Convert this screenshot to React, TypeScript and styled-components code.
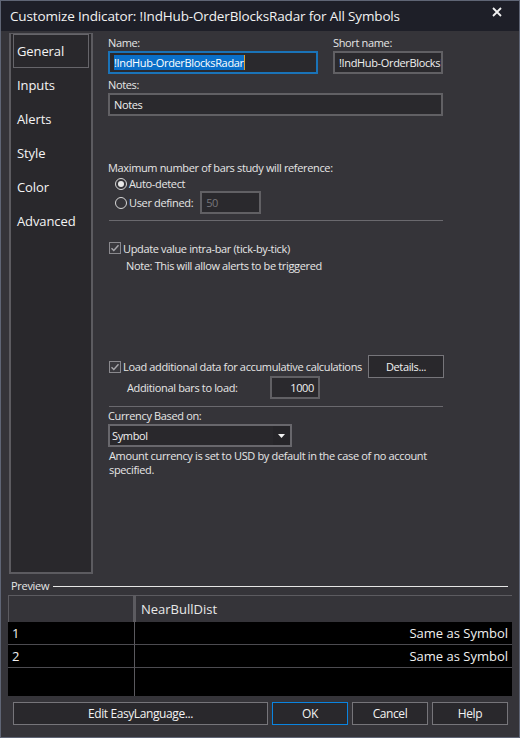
import { Fragment } from 'react';
import styled, { createGlobalStyle } from 'styled-components';

const FONT = `"Open Sans", "Noto Sans", sans-serif`;

const GlobalStyle = createGlobalStyle`
  html, body {
    margin: 0;
    padding: 0;
    background: #353439;
  }
  * { box-sizing: border-box; }
`;

const Window = styled.div`
  width: 520px;
  height: 738px;
  background: #353439;
  border: 1px solid #5f6575;
  display: flex;
  flex-direction: column;
  font-family: ${FONT};
  color: #e6e6e6;
  overflow: hidden;
`;

const TitleBar = styled.div`
  height: 30px;
  flex: none;
  background: #1e1f28;
  display: flex;
  align-items: center;
  justify-content: space-between;
  padding: 0 17px 0 9px;
  font-size: 13.5px;
  letter-spacing: -0.15px;
  color: #f2f2f2;
`;

const CloseIcon = styled.svg`
  width: 10px;
  height: 10px;
  margin-top: -8px;
`;

const Main = styled.div`
  display: flex;
  height: 543px;
  flex: none;
  padding-top: 2px;
  padding-left: 8px;
`;

const Sidebar = styled.nav`
  width: 84px;
  height: 541px;
  border: 2px solid #5c5b60;
  border-top-width: 1px;
  background: #29282c;
  padding: 0 2px;
  display: flex;
  flex-direction: column;
`;

const NavItem = styled.div<{ $active?: boolean }>`
  height: 34px;
  display: flex;
  align-items: center;
  padding-left: 3px;
  font-size: 13px;
  letter-spacing: -0.1px;
  color: #f4f4f4;
  border: 1px solid ${p => (p.$active ? '#66656a' : 'transparent')};
`;

const Content = styled.div`
  margin-left: 15px;
  width: 336px;
  padding-top: 2px;
  display: flex;
  flex-direction: column;
  font-size: 11px;
  letter-spacing: -0.35px;
  white-space: nowrap;
`;

const Row = styled.div<{ $mt?: number; $pl?: number; $h?: number }>`
  display: flex;
  align-items: center;
  margin-top: ${p => p.$mt ?? 0}px;
  padding-left: ${p => p.$pl ?? 0}px;
  height: ${p => (p.$h ? `${p.$h}px` : 'auto')};
  flex: none;
`;

const FieldCol = styled.div<{ $w: number; $ml?: number }>`
  width: ${p => p.$w}px;
  margin-left: ${p => p.$ml ?? 0}px;
  display: flex;
  flex-direction: column;
`;

const Label = styled.div<{ $mt?: number; $pl?: number; $w?: number }>`
  line-height: 16px;
  height: 16px;
  margin-top: ${p => p.$mt ?? 0}px;
  padding-left: ${p => p.$pl ?? 0}px;
  width: ${p => (p.$w ? `${p.$w}px` : 'auto')};
  flex: none;
`;

const TextBox = styled.div<{ $w?: number; $focus?: boolean; $right?: boolean; $dim?: boolean; $mt?: number; $ml?: number }>`
  width: ${p => (p.$w ? `${p.$w}px` : '100%')};
  height: 23px;
  margin-top: ${p => p.$mt ?? 0}px;
  margin-left: ${p => p.$ml ?? 0}px;
  border: 2px solid ${p => (p.$focus ? '#1a73b8' : '#616064')};
  background: #2a292d;
  display: flex;
  align-items: center;
  justify-content: ${p => (p.$right ? 'flex-end' : 'flex-start')};
  padding: 0 4px;
  color: ${p => (p.$dim ? '#77767b' : '#f0f0f0')};
  overflow: hidden;
  flex: none;
`;

const Selected = styled.span`
  background: #0a6fc8;
  color: #ffffff;
  border-right: 1px solid #e0a030;
  line-height: 15px;
`;

const Separator = styled.div<{ $mt: number }>`
  height: 1px;
  width: 334px;
  margin-top: ${p => p.$mt}px;
  margin-left: 1px;
  background: #6a696e;
  flex: none;
`;

const Radio = styled.span<{ $on?: boolean }>`
  width: 12px;
  height: 12px;
  border-radius: 50%;
  border: 1px solid #d8d8d8;
  margin-right: 2px;
  flex: none;
  display: flex;
  align-items: center;
  justify-content: center;
  &::after {
    content: '';
    width: 6px;
    height: 6px;
    border-radius: 50%;
    background: ${p => (p.$on ? '#e8e8e8' : 'transparent')};
  }
`;

const Check = styled.svg`
  width: 12px;
  height: 12px;
  margin-right: 2px;
  flex: none;
`;

const Button = styled.div<{ $w: number; $primary?: boolean; $ml?: number; $auto?: boolean }>`
  width: ${p => p.$w}px;
  height: 23px;
  margin-left: ${p => (p.$auto ? 'auto' : `${p.$ml ?? 0}px`)};
  border: 1px solid ${p => (p.$primary ? '#0a84e0' : '#76757a')};
  background: #29282c;
  display: flex;
  align-items: center;
  justify-content: center;
  color: #f2f2f2;
  flex: none;
`;

const Select = styled.div`
  width: 184px;
  height: 23px;
  border: 2px solid #68676c;
  background: #29282c;
  display: flex;
  align-items: center;
  padding-left: 2px;
  color: #f0f0f0;
  flex: none;
`;

const SelectText = styled.span`
  flex: 1;
`;

const SelectArrow = styled.span`
  width: 17px;
  height: 100%;
  display: flex;
  align-items: center;
  justify-content: center;
  background: #262529;
`;

const Paragraph = styled.div`
  margin-top: 2px;
  line-height: 14px;
  padding-left: 1px;
`;

const PreviewHeader = styled.div`
  display: flex;
  align-items: center;
  height: 16px;
  margin-top: 3px;
  padding-left: 10px;
  padding-right: 11px;
  font-size: 11px;
  letter-spacing: -0.3px;
  flex: none;
`;

const PreviewLine = styled.div`
  flex: 1;
  height: 1px;
  background: #e6e6e6;
  margin-left: 4px;
  margin-top: 2px;
`;

const Grid = styled.div`
  margin: 2px 0 0 7px;
  width: 504px;
  height: 101px;
  display: grid;
  grid-template-columns: 127px 1fr;
  grid-template-rows: 27px 23px 23px 1fr;
  background: #000;
  font-size: 13px;
  flex: none;
`;

const HeadCell = styled.div<{ $first?: boolean }>`
  background: #353439;
  border-top: 1px solid #5c5b60;
  border-left: 1px solid #5c5b60;
  border-right: ${p => (p.$first ? '2px solid #5c5b60' : 'none')};
  display: flex;
  align-items: center;
  padding-left: 5px;
  color: #e8e8e8;
`;

const Cell = styled.div<{ $first?: boolean; $last?: boolean }>`
  border-right: ${p => (p.$first ? '1px solid #5a595e' : 'none')};
  border-bottom: ${p => (p.$last ? 'none' : '1px solid #4c4b50')};
  display: flex;
  align-items: center;
  justify-content: ${p => (p.$first ? 'flex-start' : 'flex-end')};
  padding: 0 4px;
  color: #f0f0f0;
`;

const ButtonBar = styled.div`
  display: flex;
  margin-top: 6px;
  padding-left: 12px;
  font-size: 12px;
  letter-spacing: -0.4px;
`;

const CheckIcon = () => (
  <Check viewBox="0 0 12 12">
    <rect x="0.5" y="0.5" width="11" height="11" fill="#3a393e" stroke="#8a898e" />
    <path d="M2.5 6.2 L4.8 8.5 L9.5 3.2" fill="none" stroke="#a8a7ac" strokeWidth="1.4" />
  </Check>
);

const navItems = ['General', 'Inputs', 'Alerts', 'Style', 'Color', 'Advanced'];

const rows = [
  { n: '1', v: 'Same as Symbol' },
  { n: '2', v: 'Same as Symbol' },
  { n: '', v: '' },
];

export default function App() {
  return (
    <>
      <GlobalStyle />
      <Window>
        <TitleBar>
          <span>Customize Indicator: !IndHub-OrderBlocksRadar for All Symbols</span>
          <CloseIcon viewBox="0 0 10 10">
            <path d="M1 1 L9 9 M9 1 L1 9" stroke="#f2f2f2" strokeWidth="1.8" />
          </CloseIcon>
        </TitleBar>

        <Main>
          <Sidebar>
            {navItems.map((n, i) => (
              <NavItem key={n} $active={i === 0}>{n}</NavItem>
            ))}
          </Sidebar>

          <Content>
            <Row>
              <FieldCol $w={210}>
                <Label>Name:</Label>
                <TextBox $focus $mt={0}>
                  <Selected>!IndHub-OrderBlocksRadar</Selected>
                </TextBox>
              </FieldCol>
              <FieldCol $w={110} $ml={15}>
                <Label>Short name:</Label>
                <TextBox $mt={0}>!IndHub-OrderBlocksRadar</TextBox>
              </FieldCol>
            </Row>
            <Label $mt={3}>Notes:</Label>
            <TextBox $w={335}>Notes</TextBox>

            <Label $mt={44}>Maximum number of bars study will reference:</Label>
            <Row $pl={7} $h={15}>
              <Radio $on />Auto-detect
            </Row>
            <Row $pl={7} $h={23}>
              <Radio />User defined:
              <TextBox $w={61} $dim $ml={7}>50</TextBox>
            </Row>
            <Separator $mt={6} />

            <Row $mt={19} $pl={1} $h={16}>
              <CheckIcon />Update value intra-bar (tick-by-tick)
            </Row>
            <Label $mt={2} $pl={18}>Note: This will allow alerts to be triggered</Label>

            <Row $mt={81} $pl={1} $h={23}>
              <CheckIcon />Load additional data for accumulative calculations
              <Button $w={76} $auto>Details...</Button>
            </Row>
            <Row $mt={-2} $pl={19} $h={23}>
              <Label $w={143}>Additional bars to load:</Label>
              <TextBox $w={50} $right>1000</TextBox>
            </Row>
            <Separator $mt={7} />

            <Label $mt={1}>Currency Based on:</Label>
            <Select>
              <SelectText>Symbol</SelectText>
              <SelectArrow>
                <svg width="7" height="4" viewBox="0 0 7 4">
                  <path d="M0 0 H7 L3.5 4 Z" fill="#f2f2f2" />
                </svg>
              </SelectArrow>
            </Select>
            <Paragraph>
              Amount currency is set to USD by default in the case of no account
              <br />
              specified.
            </Paragraph>
          </Content>
        </Main>

        <PreviewHeader>
          Preview
          <PreviewLine />
        </PreviewHeader>
        <Grid>
          <HeadCell $first />
          <HeadCell>NearBullDist</HeadCell>
          {rows.map((r, i) => (
            <Fragment key={i}>
              <Cell $first $last={i === rows.length - 1}>{r.n}</Cell>
              <Cell $last={i === rows.length - 1}>{r.v}</Cell>
            </Fragment>
          ))}
        </Grid>

        <ButtonBar>
          <Button $w={255}>Edit EasyLanguage...</Button>
          <Button $w={76} $primary $ml={4}>OK</Button>
          <Button $w={76} $ml={4}>Cancel</Button>
          <Button $w={76} $ml={4}>Help</Button>
        </ButtonBar>
      </Window>
    </>
  );
}
